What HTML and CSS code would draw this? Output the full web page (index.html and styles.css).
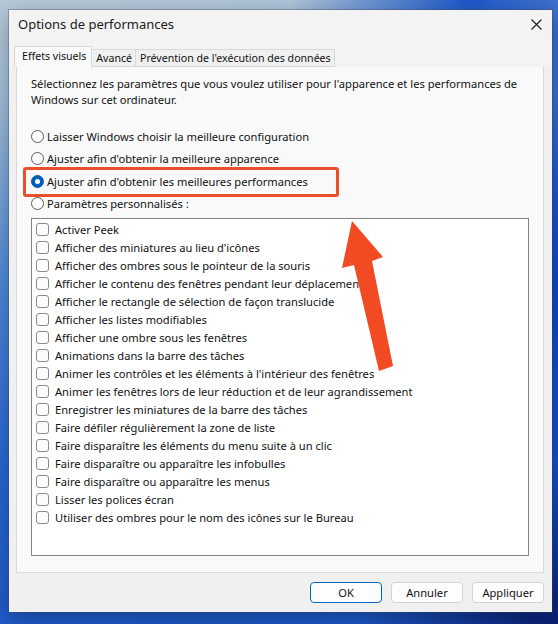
FILE: index.html
```html
<!DOCTYPE html>
<html lang="fr">
<head>
<meta charset="utf-8">
<title>Options de performances</title>
<link rel="stylesheet" href="styles.css">
</head>
<body>
<div class="desktop">
  <div class="dialog">
    <div class="titlebar">
      <span class="title">Options de performances</span>
      <svg class="close" width="11" height="11" viewBox="0 0 11 11"><path d="M0.5 0.5 L10.5 10.5 M10.5 0.5 L0.5 10.5" stroke="#1b1b1b" stroke-width="1.1" fill="none"/></svg>
    </div>
    <div class="tabs">
      <div class="tab active">Effets visuels</div>
      <div class="tab">Avancé</div>
      <div class="tab">Prévention de l'exécution des données</div>
    </div>
    <div class="panel">
      <p class="intro">Sélectionnez les paramètres que vous voulez utiliser pour l'apparence et les performances de Windows sur cet ordinateur.</p>
      <div class="radios">
        <div class="radio-row"><span class="radio"></span><span>Laisser Windows choisir la meilleure configuration</span></div>
        <div class="radio-row"><span class="radio"></span><span>Ajuster afin d'obtenir la meilleure apparence</span></div>
        <div class="radio-row"><span class="radio checked"></span><span>Ajuster afin d'obtenir les meilleures performances</span></div>
        <div class="radio-row"><span class="radio"></span><span>Paramètres personnalisés :</span></div>
        <div class="highlight"></div>
      </div>
      <div class="list">
        <div class="item"><span class="box"></span>Activer Peek</div>
        <div class="item"><span class="box"></span>Afficher des miniatures au lieu d'icônes</div>
        <div class="item"><span class="box"></span>Afficher des ombres sous le pointeur de la souris</div>
        <div class="item"><span class="box"></span>Afficher le contenu des fenêtres pendant leur déplacement</div>
        <div class="item"><span class="box"></span>Afficher le rectangle de sélection de façon translucide</div>
        <div class="item"><span class="box"></span>Afficher les listes modifiables</div>
        <div class="item"><span class="box"></span>Afficher une ombre sous les fenêtres</div>
        <div class="item"><span class="box"></span>Animations dans la barre des tâches</div>
        <div class="item"><span class="box"></span>Animer les contrôles et les éléments à l'intérieur des fenêtres</div>
        <div class="item"><span class="box"></span>Animer les fenêtres lors de leur réduction et de leur agrandissement</div>
        <div class="item"><span class="box"></span>Enregistrer les miniatures de la barre des tâches</div>
        <div class="item"><span class="box"></span>Faire défiler régulièrement la zone de liste</div>
        <div class="item"><span class="box"></span>Faire disparaître les éléments du menu suite à un clic</div>
        <div class="item"><span class="box"></span>Faire disparaître ou apparaître les infobulles</div>
        <div class="item"><span class="box"></span>Faire disparaître ou apparaître les menus</div>
        <div class="item"><span class="box"></span>Lisser les polices écran</div>
        <div class="item"><span class="box"></span>Utiliser des ombres pour le nom des icônes sur le Bureau</div>
      </div>
    </div>
    <div class="footer">
      <button class="btn default">OK</button>
      <button class="btn">Annuler</button>
      <button class="btn">Appliquer</button>
    </div>
  </div>
  <svg class="arrow" width="558" height="624" viewBox="0 0 558 624">
    <polygon points="352,221 383,257 372,261 393,366 379,371 354,265 342,268" fill="#f24a22"/>
  </svg>
</div>
</body>
</html>
```

FILE: styles.css
```css
* { box-sizing: border-box; }
html, body { margin: 0; padding: 0; }
body {
  width: 558px;
  height: 624px;
  overflow: hidden;
  font-family: "Noto Sans", "Open Sans", sans-serif;
  font-size: 11.15px;
  color: #111;
}
.desktop {
  position: relative;
  width: 558px;
  height: 624px;
  padding: 10px 6px 12px 9px;
  background:
    radial-gradient(ellipse 180px 120px at 470px 0px, rgba(20,80,200,0.95), rgba(20,80,200,0) 100%),
    radial-gradient(ellipse 200px 160px at 558px 624px, rgba(8,30,110,0.95), rgba(8,30,110,0) 100%),
    radial-gradient(ellipse 120px 500px at 558px 300px, rgba(15,70,200,1), rgba(15,70,200,0) 100%),
    linear-gradient(172deg, #b8c9d8 0%, #a2bfd9 14%, #5089d8 40%, #2a68d2 65%, #1b54c4 100%);
}
.dialog {
  width: 543px;
  height: 602px;
  background: #f0f0f0;
  display: flex;
  flex-direction: column;
  box-shadow: 0 0 0 1px rgba(60,70,90,0.35), 0 6px 20px rgba(0,0,0,0.3);
}
.titlebar {
  height: 37px;
  display: flex;
  justify-content: space-between;
  align-items: flex-start;
  padding: 6px 10px 0 9px;
  background: #f3f3f3;
}
.title {
  font-size: 13px;
  line-height: 16px;
  color: #1a1a1a;
}
.close { margin-top: 3px; }
.tabs {
  height: 20px;
  display: flex;
  align-items: flex-end;
  padding-left: 5px;
  margin-bottom: -1px;
  position: relative;
  z-index: 1;
  background: #f3f3f3;
  font-size: 10.6px;
}
.tab {
  height: 18px;
  line-height: 16px;
  padding: 0 3px 0 4px;
  border: 1px solid #d9d9d9;
  border-left: none;
  background: #f0f0f0;
  white-space: nowrap;
}
.tab.active {
  height: 21px;
  line-height: 18px;
  padding: 0 5px 0 7px;
  border-left: 1px solid #d9d9d9;
  border-bottom: none;
  background: #f9f9f9;
}
.panel {
  height: 507px;
  margin: 0 8px 0 7px;
  border: 1px solid #d9d9d9;
  background: #f9f9f9;
  padding: 9px 14px 16px 14px;
  display: flex;
  flex-direction: column;
}
.intro {
  margin: 0;
  line-height: 16px;
  width: 500px;
}
.radios {
  position: relative;
  margin-top: 17px;
  margin-bottom: 3px;
}
.radio-row {
  height: 22.5px;
  display: flex;
  align-items: center;
  gap: 3px;
  white-space: nowrap;
}
.radio {
  width: 13px;
  height: 13px;
  border-radius: 50%;
  border: 1px solid #5c5c5c;
  background: #fdfdfd;
  flex: none;
  position: relative;
}
.radio.checked {
  border-color: #005fb8;
  background: #005fb8;
}
.radio.checked::after {
  content: "";
  position: absolute;
  left: 3px;
  top: 3px;
  width: 5px;
  height: 5px;
  border-radius: 50%;
  background: #fff;
}
.highlight {
  position: absolute;
  left: -8px;
  top: 42px;
  width: 316px;
  height: 30px;
  border: 3px solid #ea4f2b;
  border-radius: 3px;
  pointer-events: none;
}
.list {
  flex: 1;
  border: 1px solid #838383;
  background: #fff;
  padding-top: 1px;
}
.item {
  height: 18px;
  display: flex;
  align-items: center;
  padding-left: 4px;
  white-space: nowrap;
}
.box {
  width: 13px;
  height: 13px;
  border: 1px solid #8a8a8a;
  border-radius: 3px;
  background: #fdfdfd;
  margin-right: 6px;
  flex: none;
}
.footer {
  flex: 1;
  display: flex;
  justify-content: flex-end;
  align-items: flex-start;
  gap: 9px;
  padding: 9px 8px 0 0;
}
.btn {
  width: 72px;
  height: 21px;
  border: 1px solid #d3d3d3;
  border-radius: 4px;
  background: #fdfdfd;
  font-family: inherit;
  font-size: 11.15px;
  color: #111;
  padding: 0;
}
.btn.default {
  border-color: #0067c0;
}
.arrow {
  position: absolute;
  left: 0;
  top: 0;
  pointer-events: none;
}
```
